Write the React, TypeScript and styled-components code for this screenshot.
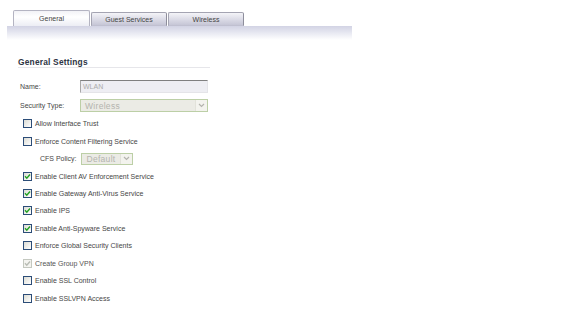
import React from "react";
import styled, { createGlobalStyle } from "styled-components";

const Global = createGlobalStyle`
  html, body { margin: 0; padding: 0; background: #ffffff; }
  body { font-family: "Liberation Sans", Arial, sans-serif; font-size: 7px; color: #464646; }
`;

const Page = styled.div`
  width: 576px;
  height: 322px;
  overflow: hidden;
`;

const Header = styled.div`
  margin-left: 7px;
  width: 345px;
  padding-top: 10px;
`;

const TabRow = styled.div`
  display: flex;
  align-items: flex-end;
  padding-left: 6px;
  height: 16px;
`;

const Tab = styled.div<{ $active?: boolean; $w: number }>`
  box-sizing: border-box;
  width: ${(p) => p.$w}px;
  height: ${(p) => (p.$active ? 16 : 14)}px;
  display: flex;
  align-items: center;
  justify-content: center;
  font-size: 7px;
  color: #444444;
  border: 1px solid ${(p) => (p.$active ? "#b4b4c2" : "#a4a4b2")};
  border-bottom: ${(p) => (p.$active ? "none" : "1px solid #c0c0d0")};
  border-right-color: ${(p) => (p.$active ? "#b4b4c2" : "#8e8e9c")};
  border-radius: 2px 2px 0 0;
  margin-right: 1px;
  background: ${(p) =>
    p.$active
      ? "linear-gradient(#f2f2f6, #ffffff 40%, #ecedf4)"
      : "linear-gradient(#f4f4f8, #d8d8e4 60%, #c6c6d6)"};
`;

const Band = styled.div`
  height: 14px;
  background: linear-gradient(#d2d3e4, #e8e9f2 50%, #ffffff);
`;

const Section = styled.div`
  padding-left: 18px;
  width: 192px;
`;

const Heading = styled.div`
  margin-top: 17px;
  height: 10px;
  line-height: 10px;
  font-size: 8.4px;
  font-weight: bold;
  color: #2e3544;
  letter-spacing: 0.2px;
  border-bottom: 1px solid #e6e6ea;
`;

const FieldRow = styled.div<{ $top: number }>`
  display: flex;
  align-items: center;
  height: 13px;
  margin-top: ${(p) => p.$top}px;
`;

const FieldLabel = styled.div`
  width: 60px;
  padding-left: 2px;
`;

const TextInput = styled.div`
  box-sizing: border-box;
  width: 128px;
  height: 13px;
  display: flex;
  align-items: center;
  padding-left: 2px;
  background: #eeeef3;
  border-top: 1px solid #808080;
  border-left: 1px solid #a8a8a8;
  border-right: 1px solid #e4e4e8;
  border-bottom: 1px solid #e4e4e8;
  color: #ababab;
  font-size: 7px;
`;

const Select = styled.div<{ $w: number; $h: number }>`
  box-sizing: border-box;
  width: ${(p) => p.$w}px;
  height: ${(p) => p.$h}px;
  display: flex;
  align-items: center;
  background: #ebebe5;
  border: 1px solid #bccfa6;
  color: #b4b4ae;
  font-size: 8.5px;
`;

const SelectText = styled.div<{ $center?: boolean }>`
  flex: 1;
  padding-left: ${(p) => (p.$center ? 0 : 4)}px;
  text-align: ${(p) => (p.$center ? "center" : "left")};
  letter-spacing: 0.3px;
`;

const Arrow = styled.div`
  width: 11px;
  align-self: stretch;
  display: flex;
  align-items: center;
  justify-content: center;
  background: #f3f3ee;
  border-left: 1px solid #e2e2da;
`;

const CheckList = styled.div`
  margin-top: 3px;
  display: flex;
  flex-direction: column;
`;

const CheckRow = styled.div<{ $indent?: number }>`
  height: 17.45px;
  display: flex;
  align-items: center;
  padding-left: ${(p) => p.$indent ?? 5}px;
`;

const Box = styled.div<{ $disabled?: boolean }>`
  box-sizing: border-box;
  width: 9px;
  height: 9px;
  border: 1px solid ${(p) => (p.$disabled ? "#c4c8c0" : "#2c4d78")};
  background: ${(p) =>
    p.$disabled ? "#f4f4f0" : "linear-gradient(135deg, #dcdcd4, #ffffff)"};
  display: flex;
  align-items: center;
  justify-content: center;
  flex: none;
`;

const CheckText = styled.span<{ $disabled?: boolean }>`
  margin-left: 3px;
  color: ${(p) => (p.$disabled ? "#555555" : "#464646")};
`;

const PolicyLabel = styled.div`
  width: 41px;
`;

const Chevron = () => (
  <svg width="7" height="5" viewBox="0 0 7 5">
    <polyline points="1,1 3.5,3.5 6,1" fill="none" stroke="#b4b4ae" strokeWidth="1.2" />
  </svg>
);

const Check = ({ disabled }: { disabled?: boolean }) => (
  <svg width="7" height="7" viewBox="0 0 7 7">
    <polyline
      points="1,3.3 2.8,5.2 6,1.5"
      fill="none"
      stroke={disabled ? "#b8bcb4" : "#21a121"}
      strokeWidth="1.4"
    />
  </svg>
);

type Item = { label: string; checked?: boolean; disabled?: boolean };

const CheckItem = ({ label, checked, disabled }: Item) => (
  <CheckRow>
    <Box $disabled={disabled}>{checked && <Check disabled={disabled} />}</Box>
    <CheckText $disabled={disabled}>{label}</CheckText>
  </CheckRow>
);

const afterCfs: Item[] = [
  { label: "Enable Client AV Enforcement Service", checked: true },
  { label: "Enable Gateway Anti-Virus Service", checked: true },
  { label: "Enable IPS", checked: true },
  { label: "Enable Anti-Spyware Service", checked: true },
  { label: "Enforce Global Security Clients" },
  { label: "Create Group VPN", checked: true, disabled: true },
  { label: "Enable SSL Control" },
  { label: "Enable SSLVPN Access" },
];

export default function App() {
  return (
    <Page>
      <Global />
      <Header>
        <TabRow>
          <Tab $active $w={77}>General</Tab>
          <Tab $w={76}>Guest Services</Tab>
          <Tab $w={76}>Wireless</Tab>
        </TabRow>
        <Band />
      </Header>
      <Section>
        <Heading>General Settings</Heading>
        <FieldRow $top={12}>
          <FieldLabel>Name:</FieldLabel>
          <TextInput>WLAN</TextInput>
        </FieldRow>
        <FieldRow $top={6}>
          <FieldLabel>Security Type:</FieldLabel>
          <Select $w={128} $h={13}>
            <SelectText>Wireless</SelectText>
            <Arrow>
              <Chevron />
            </Arrow>
          </Select>
        </FieldRow>
        <CheckList>
          <CheckItem label="Allow Interface Trust" />
          <CheckItem label="Enforce Content Filtering Service" />
          <CheckRow $indent={22}>
            <PolicyLabel>CFS Policy:</PolicyLabel>
            <Select $w={52} $h={12}>
              <SelectText $center>Default</SelectText>
              <Arrow>
                <Chevron />
              </Arrow>
            </Select>
          </CheckRow>
          {afterCfs.map((it) => (
            <CheckItem key={it.label} {...it} />
          ))}
        </CheckList>
      </Section>
    </Page>
  );
}
